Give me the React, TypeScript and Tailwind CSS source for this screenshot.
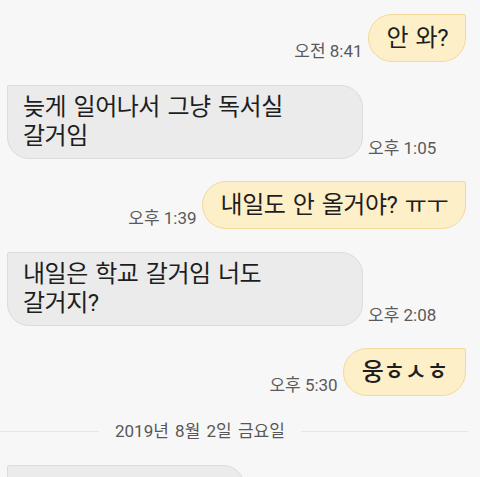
import React from 'react';

const FONT = "font-['Roboto','Noto_Sans_CJK_KR',sans-serif]";

type Msg = {
  side: 'me' | 'them';
  lines: string[];
  time: string;
  gap: string;
  bold?: boolean;
};

const messages: Msg[] = [
  { side: 'me', lines: ['안 와?'], time: '오전 8:41', gap: 'mt-[13px]' },
  { side: 'them', lines: ['늦게 일어나서 그냥 독서실', '갈거임'], time: '오후 1:05', gap: 'mt-[23px]' },
  { side: 'me', lines: ['내일도 안 올거야? ㅠㅜ'], time: '오후 1:39', gap: 'mt-[22px]' },
  { side: 'them', lines: ['내일은 학교 갈거임 너도', '갈거지?'], time: '오후 2:08', gap: 'mt-[23px]' },
  { side: 'me', lines: ['웅ㅎㅅㅎ'], time: '오후 5:30', gap: 'mt-[22px]', bold: true },
];

const DateDivider = ({ text, className }: { text: string; className: string }) => (
  <div className={`flex items-center h-[20px] shrink-0 ${className}`}>
    <div className="w-[99px] h-px bg-[#e6e6e6]" />
    <span className="px-4 text-[17px] leading-[20px] text-[#575757] [word-spacing:2px] whitespace-nowrap">
      {text}
    </span>
    <div className="flex-1 h-px bg-[#e6e6e6] mr-[12px]" />
  </div>
);

const Time = ({ t }: { t: string }) => (
  <span className="text-[17px] leading-[20px] text-[#5a5a5a] whitespace-nowrap mb-[1px]">{t}</span>
);

const Bubble = ({ m }: { m: Msg }) => {
  const mine = m.side === 'me';
  return (
    <div
      className={
        mine
          ? 'min-h-[48px] flex flex-col justify-center pl-[18px] pr-[17px] py-[7px] bg-[#fdefc8] border border-[#f3d99c] rounded-[24px] rounded-tr-[2px]'
          : 'w-[356px] min-h-[48px] flex flex-col justify-center px-[15px] py-[7px] bg-[#ebebeb] border border-[#dcdcdc] rounded-[22px] rounded-tl-[2px]'
      }
    >
      {m.lines.map((l, i) => (
        <div
          key={i}
          className={`text-[24px] leading-[29px] text-[#1e1e1e] whitespace-nowrap tracking-[-0.5px] [word-spacing:2px] ${m.bold ? 'font-medium' : ''}`}
        >
          {l}
        </div>
      ))}
    </div>
  );
};

export default function App() {
  return (
    <div className={`w-[480px] h-[477px] overflow-hidden bg-[#f7f7f7] flex flex-col ${FONT}`}>
      <DateDivider text="2019년 8월 1일 목요일" className="-mt-[19px]" />
      {messages.map((m, i) =>
        m.side === 'me' ? (
          <div key={i} className={`flex justify-end items-end gap-[5px] pr-[14px] shrink-0 ${m.gap}`}>
            <Time t={m.time} />
            <Bubble m={m} />
          </div>
        ) : (
          <div key={i} className={`flex items-end gap-[5px] pl-[7px] shrink-0 ${m.gap}`}>
            <Bubble m={m} />
            <Time t={m.time} />
          </div>
        )
      )}
      <DateDivider text="2019년 8월 2일 금요일" className="mt-[25px]" />
      <div className="pl-[7px] mt-[24px] shrink-0">
        <div className="w-[238px] h-[48px] bg-[#ebebeb] border border-[#dcdcdc] rounded-[22px] rounded-tl-[2px]" />
      </div>
    </div>
  );
}
